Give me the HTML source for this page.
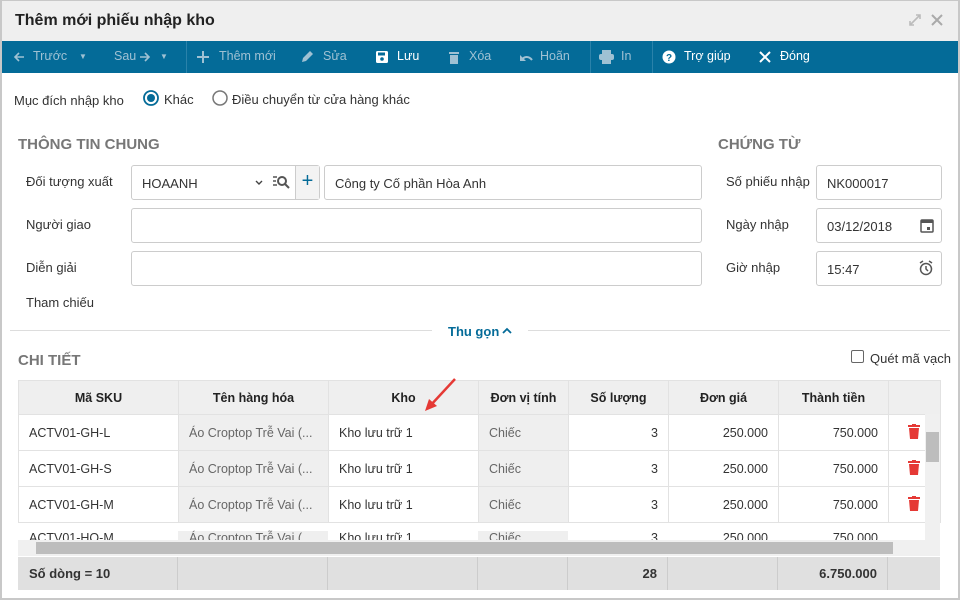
<!DOCTYPE html>
<html><head><meta charset="utf-8"><style>
*{box-sizing:border-box;margin:0;padding:0}
body{width:960px;height:600px;overflow:hidden;font-family:"Liberation Sans",Arial,sans-serif;font-size:13px;color:#333;background:#fff;position:relative}
.a{position:absolute}
.frame{position:absolute;left:0;top:0;width:960px;height:600px;border:2px solid #c8c8c8;border-top:1px solid #c8c8c8}
.title{left:2px;top:1px;width:956px;height:40px;background:#efefef}
.tb{left:2px;top:41px;width:956px;height:32px;background:#046b98;color:#fff;font-size:12.5px}
.tb span{position:absolute;top:8px;white-space:nowrap}
.dim{color:#9fc1d3}
.lbl{font-size:13px;color:#333;position:absolute}
.inp{position:absolute;border:1px solid #ccc;border-radius:3px;background:#fff;height:35px;font-size:13px;padding:10px 10px;color:#333}
.h{font-weight:bold;color:#777;font-size:15px;position:absolute}
table{border-collapse:collapse;position:absolute;left:18px;top:380px;table-layout:fixed;font-size:12.5px}
td,th{border:1px solid #e2e2e2;height:36px;padding:0 10px;white-space:nowrap;overflow:hidden}
th{background:#efefef;height:34px;font-weight:bold;color:#222}
.g{background:#efefef;color:#666}
.r{text-align:right}
.del{padding-left:19px}
</style></head><body>
<div class="frame"></div>
<div class="a title"><div class="a" style="left:13px;top:11px;font-size:16px;font-weight:bold;color:#222">Thêm mới phiếu nhập kho</div>
<svg class="a" style="left:906px;top:12px" width="14" height="14"><path d="M2 12L12 2M8 2h4v4M2 8v4h4" stroke="#bbb" stroke-width="1.6" fill="none"/></svg>
<svg class="a" style="left:929px;top:13px" width="12" height="12"><path d="M1 1L11 11M11 1L1 11" stroke="#aaa" stroke-width="2"/></svg></div>
<div class="a tb">
<svg class="a" style="left:11px;top:10px" width="12" height="12"><path d="M11 6H2M6 2L2 6l4 4" stroke="#9fc1d3" stroke-width="1.6" fill="none"/></svg>
<span class="dim" style="left:31px">Trước</span><span class="dim" style="left:77px;font-size:8px;top:11px">▼</span>
<span class="dim" style="left:112px">Sau</span>
<svg class="a" style="left:137px;top:10px" width="12" height="12"><path d="M1 6h9M6 2l4 4-4 4" stroke="#9fc1d3" stroke-width="1.6" fill="none"/></svg>
<span class="dim" style="left:158px;font-size:8px;top:11px">▼</span>
<div class="a" style="left:184px;top:0;width:1px;height:32px;background:#2a82aa"></div>
<svg class="a" style="left:195px;top:10px" width="12" height="12"><path d="M6 0v12M0 6h12" stroke="#9fc1d3" stroke-width="2"/></svg><span class="dim" style="left:217px">Thêm mới</span>
<svg class="a" style="left:299px;top:9px" width="13" height="13"><path d="M1 12l1-4 7-7 3 3-7 7z" fill="#9fc1d3"/></svg><span class="dim" style="left:321px">Sửa</span>
<svg class="a" style="left:374px;top:10px" width="12" height="12"><rect x="0" y="0" width="12" height="12" rx="1.5" fill="#fff"/><rect x="2" y="1.5" width="7" height="3" fill="#046b98"/><circle cx="6" cy="8" r="1.8" fill="#046b98"/></svg><span style="left:395px">Lưu</span>
<svg class="a" style="left:447px;top:10px" width="10" height="13"><rect x="0" y="1" width="10" height="2" fill="#9fc1d3"/><rect x="1" y="4" width="8" height="9" fill="#9fc1d3"/></svg><span class="dim" style="left:467px">Xóa</span>
<svg class="a" style="left:517px;top:10px" width="14" height="12"><path d="M3 9c2-4 7-4 10 0" stroke="#9fc1d3" stroke-width="2" fill="none"/><path d="M1 4v6h6z" fill="#9fc1d3"/></svg><span class="dim" style="left:538px">Hoãn</span>
<div class="a" style="left:588px;top:0;width:1px;height:32px;background:#2a82aa"></div>
<svg class="a" style="left:597px;top:9px" width="15" height="14"><rect x="3" y="0" width="9" height="4" fill="#9fc1d3"/><rect x="0" y="4" width="15" height="6" rx="2" fill="#9fc1d3"/><rect x="3" y="9" width="9" height="5" fill="#9fc1d3"/></svg><span class="dim" style="left:619px">In</span>
<div class="a" style="left:650px;top:0;width:1px;height:32px;background:#2a82aa"></div>
<svg class="a" style="left:660px;top:9px" width="14" height="14"><circle cx="7" cy="7" r="6.5" fill="#fff"/><text x="7" y="11" font-size="10" font-weight="bold" text-anchor="middle" fill="#046b98" font-family="Liberation Sans">?</text></svg><span style="left:682px">Trợ giúp</span>
<svg class="a" style="left:757px;top:10px" width="12" height="12"><path d="M1 1L11 11M11 1L1 11" stroke="#fff" stroke-width="2"/></svg><span style="left:778px">Đóng</span>
</div>
<div class="lbl" style="left:14px;top:93px">Mục đích nhập kho</div>
<svg class="a" style="left:143px;top:90px" width="16" height="16"><circle cx="8" cy="8" r="7" fill="none" stroke="#046b98" stroke-width="1.8"/><circle cx="8" cy="8" r="4" fill="#046b98"/></svg>
<div class="lbl" style="left:164px;top:92px">Khác</div>
<svg class="a" style="left:212px;top:90px" width="16" height="16"><circle cx="8" cy="8" r="7" fill="none" stroke="#777" stroke-width="1.5"/></svg>
<div class="lbl" style="left:232px;top:92px">Điều chuyển từ cửa hàng khác</div>
<div class="h" style="left:18px;top:136px">THÔNG TIN CHUNG</div>
<div class="h" style="left:718px;top:136px">CHỨNG TỪ</div>
<div class="lbl" style="left:26px;top:174px">Đối tượng xuất</div>
<div class="inp" style="left:131px;top:165px;width:189px;height:35px">HOAANH</div>
<div class="a" style="left:295px;top:166px;width:24px;height:33px;background:#f3f3f3;border-left:1px solid #ccc;color:#046b98;font-size:20px;text-align:center;line-height:30px">+</div>
<svg class="a" style="left:255px;top:180px" width="8" height="6"><path d="M1 1l3 3 3-3" stroke="#444" stroke-width="1.4" fill="none"/></svg>
<svg class="a" style="left:272px;top:174px" width="20" height="16"><path d="M1 3h4M1 7h3M1 11h4" stroke="#555" stroke-width="1.5"/><circle cx="10" cy="7" r="4" fill="none" stroke="#555" stroke-width="2"/><path d="M13 10l4 4" stroke="#555" stroke-width="2"/></svg>
<div class="inp" style="left:324px;top:165px;width:378px">Công ty Cố phần Hòa Anh</div>
<div class="lbl" style="left:26px;top:217px">Người giao</div>
<div class="inp" style="left:131px;top:208px;width:571px"></div>
<div class="lbl" style="left:26px;top:260px">Diễn giải</div>
<div class="inp" style="left:131px;top:251px;width:571px"></div>
<div class="lbl" style="left:26px;top:295px">Tham chiếu</div>
<div class="lbl" style="left:726px;top:174px">Số phiếu nhập</div>
<div class="inp" style="left:816px;top:165px;width:126px">NK000017</div>
<div class="lbl" style="left:726px;top:217px">Ngày nhập</div>
<div class="inp" style="left:816px;top:208px;width:126px">03/12/2018</div>
<svg class="a" style="left:920px;top:218px" width="14" height="15"><rect x="1" y="2" width="12" height="12" rx="1" fill="none" stroke="#555" stroke-width="1.5"/><rect x="1" y="2" width="12" height="3" fill="#555"/><rect x="7" y="9" width="3" height="3" fill="#555"/></svg>
<div class="lbl" style="left:726px;top:260px">Giờ nhập</div>
<div class="inp" style="left:816px;top:251px;width:126px">15:47</div>
<svg class="a" style="left:918px;top:260px" width="16" height="16"><circle cx="8" cy="9" r="5.5" fill="none" stroke="#555" stroke-width="1.5"/><path d="M8 6v3l2 2M2 3l3-2M14 3l-3-2" stroke="#555" stroke-width="1.5" fill="none"/></svg>
<div class="a" style="left:10px;top:330px;width:422px;height:1px;background:#ddd"></div>
<div class="a" style="left:528px;top:330px;width:422px;height:1px;background:#ddd"></div>
<div class="a" style="left:448px;top:324px;font-weight:bold;color:#046b98">Thu gọn</div>
<svg class="a" style="left:502px;top:327px" width="10" height="7"><path d="M1 6l4-4 4 4" stroke="#046b98" stroke-width="1.8" fill="none"/></svg>
<div class="h" style="left:18px;top:352px">CHI TIẾT</div>
<div class="a" style="left:851px;top:350px;width:13px;height:13px;border:1.5px solid #666;border-radius:2px"></div>
<div class="lbl" style="left:870px;top:351px">Quét mã vạch</div>
<table>
<colgroup><col style="width:160px"><col style="width:150px"><col style="width:150px"><col style="width:90px"><col style="width:100px"><col style="width:110px"><col style="width:110px"><col style="width:52px"></colgroup>
<tr><th>Mã SKU</th><th>Tên hàng hóa</th><th>Kho</th><th>Đơn vị tính</th><th>Số lượng</th><th>Đơn giá</th><th>Thành tiền</th><th></th></tr>
<tr><td>ACTV01-GH-L</td><td class="g">Áo Croptop Trễ Vai (...</td><td>Kho lưu trữ 1</td><td class="g">Chiếc</td><td class="r">3</td><td class="r">250.000</td><td class="r">750.000</td><td class="del"><svg width="12" height="15"><rect x="0" y="1" width="12" height="2" fill="#e53935"/><rect x="4" y="0" width="4" height="2" fill="#e53935"/><path d="M1 4h10l-1 11H2z" fill="#e53935"/></svg></td></tr>
<tr><td>ACTV01-GH-S</td><td class="g">Áo Croptop Trễ Vai (...</td><td>Kho lưu trữ 1</td><td class="g">Chiếc</td><td class="r">3</td><td class="r">250.000</td><td class="r">750.000</td><td class="del"><svg width="12" height="15"><rect x="0" y="1" width="12" height="2" fill="#e53935"/><rect x="4" y="0" width="4" height="2" fill="#e53935"/><path d="M1 4h10l-1 11H2z" fill="#e53935"/></svg></td></tr>
<tr><td>ACTV01-GH-M</td><td class="g">Áo Croptop Trễ Vai (...</td><td>Kho lưu trữ 1</td><td class="g">Chiếc</td><td class="r">3</td><td class="r">250.000</td><td class="r">750.000</td><td class="del"><svg width="12" height="15"><rect x="0" y="1" width="12" height="2" fill="#e53935"/><rect x="4" y="0" width="4" height="2" fill="#e53935"/><path d="M1 4h10l-1 11H2z" fill="#e53935"/></svg></td></tr>
</table>
<div class="a" style="left:18px;top:522px;width:907px;height:18px;overflow:hidden">
<div style="display:flex;height:36px;padding-top:9px;font-size:12.5px"><div style="width:160px;padding-left:11px">ACTV01-HO-M</div><div style="width:150px;padding-left:11px;background:#efefef;color:#666">Áo Croptop Trễ Vai (...</div><div style="width:150px;padding-left:11px">Kho lưu trữ 1</div><div style="width:90px;padding-left:11px;background:#efefef;color:#666">Chiếc</div><div style="width:100px;text-align:right;padding-right:10px">3</div><div style="width:110px;text-align:right;padding-right:10px">250.000</div><div style="width:110px;text-align:right;padding-right:10px">750.000</div></div></div>
<div class="a" style="left:925px;top:414px;width:15px;height:126px;background:#f0f0f0"><div style="margin:18px 1px;height:30px;background:#bdbdbd"></div></div>
<div class="a" style="left:18px;top:540px;width:922px;height:16px;background:#f0f0f0"><div style="position:absolute;left:18px;top:2px;width:857px;height:12px;background:#bdbdbd"></div></div>
<div class="a" style="left:18px;top:557px;width:922px;height:33px;background:#e0e0e0;display:flex;font-weight:bold;font-size:13px;line-height:33px">
<div style="width:160px;padding-left:11px;border-right:1px solid #ccc">Số dòng = 10</div><div style="width:150px;border-right:1px solid #ccc"></div><div style="width:150px;border-right:1px solid #ccc"></div><div style="width:90px;border-right:1px solid #ccc"></div><div style="width:100px;text-align:right;padding-right:10px;border-right:1px solid #ccc">28</div><div style="width:110px;border-right:1px solid #ccc"></div><div style="width:110px;text-align:right;padding-right:10px;border-right:1px solid #ccc">6.750.000</div></div>
<svg class="a" style="left:420px;top:375px" width="40" height="40"><path d="M35 4L10 31" stroke="#e53935" stroke-width="2.5"/><path d="M5 36L9 24L17 31Z" fill="#e53935"/></svg>
</body></html>
